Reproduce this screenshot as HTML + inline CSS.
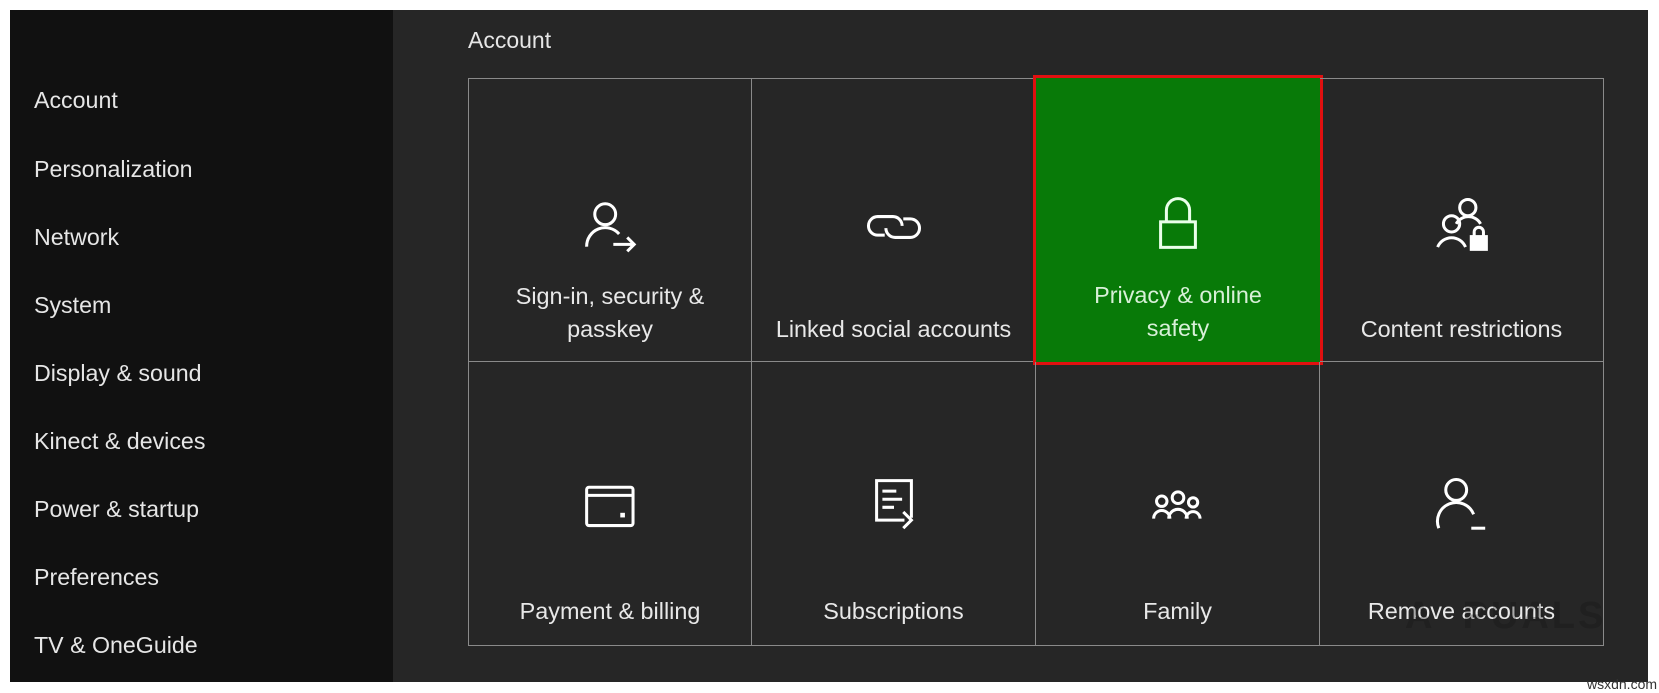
<!DOCTYPE html>
<html><head><style>
html,body{margin:0;padding:0;background:#fff;}
body{width:1659px;height:693px;position:relative;overflow:hidden;font-family:"Liberation Sans",sans-serif;}
#side{position:absolute;left:10px;top:10px;width:383px;height:672px;background:#111;}
#main{position:absolute;left:393px;top:10px;width:1255px;height:672px;background:#262626;}
.nav{position:absolute;left:24px;color:#e6e6e6;font-size:23.2px;line-height:30px;}
.hdr{position:absolute;left:75px;top:17px;color:#e6e6e6;font-size:23px;}
.cell{position:absolute;width:284px;height:284px;box-sizing:border-box;}
.g{border-right:1px solid #8a8a8a;border-bottom:1px solid #8a8a8a;}
.lbl{position:absolute;left:0;width:100%;text-align:center;color:#e8e8e8;font-size:23.4px;line-height:33px;}
svg.ic{position:absolute;left:113px;width:58px;height:58px;}
</style></head><body>
<div id="side">
<div class="nav" style="top:75px">Account</div>
<div class="nav" style="top:144px">Personalization</div>
<div class="nav" style="top:212px">Network</div>
<div class="nav" style="top:280px">System</div>
<div class="nav" style="top:348px">Display &amp; sound</div>
<div class="nav" style="top:416px">Kinect &amp; devices</div>
<div class="nav" style="top:484px">Power &amp; startup</div>
<div class="nav" style="top:552px">Preferences</div>
<div class="nav" style="top:620px">TV &amp; OneGuide</div>
</div>
<div id="main">
<div class="hdr">Account</div>
<div style="position:absolute;left:75px;top:68px;width:1136px;height:568px;border-left:1px solid #8a8a8a;border-top:1px solid #8a8a8a;box-sizing:border-box;"></div>
</div>
<!-- row 1 -->
<div class="cell g" style="left:468px;top:78px;border-left:1px solid #8a8a8a;border-top:1px solid #8a8a8a">
<svg class="ic" style="top:119px" viewBox="0 0 50 50" fill="none" stroke="#fff" stroke-width="2.6"><circle cx="20" cy="14" r="9"/><path d="M4 42 A16 16 0 0 1 32 31"/><path d="M27 40 H45 M39 34 L45 40 L39 46"/></svg>
<div class="lbl" style="top:201px">Sign-in, security &amp;<br>passkey</div></div>
<div class="cell g" style="left:752px;top:78px;border-top:1px solid #8a8a8a">
<svg class="ic" style="top:119px" viewBox="0 0 50 50" fill="none" stroke="#fff" stroke-width="2.6"><path d="M17 32 H11 a8 8 0 0 1 0 -16 H24 a8 8 0 0 1 8 8"/><path d="M33 18 H39 a8 8 0 0 1 0 16 H26 a8 8 0 0 1 -8 -8"/></svg>
<div class="lbl" style="top:234px">Linked social accounts</div></div>
<div class="cell" style="left:1033px;top:75px;width:290px;height:290px;border:3px solid #e01010;background:#087a08">
<svg class="ic" style="top:116px;left:113px" viewBox="0 0 50 50" fill="none" stroke="#eaffea" stroke-width="2.6"><path d="M15 24 V14 a10 10 0 0 1 20 0 V24"/><rect x="10" y="24" width="30" height="22"/></svg>
<div class="lbl" style="top:201px;color:#d8f0d8">Privacy &amp; online<br>safety</div></div>
<div class="cell g" style="left:1320px;top:78px;border-top:1px solid #8a8a8a">
<svg class="ic" style="top:117px" viewBox="0 0 50 50" fill="none" stroke="#fff" stroke-width="2.6"><circle cx="30" cy="10" r="7"/><path d="M20 24 A12 12 0 0 1 41 24"/><circle cx="16" cy="24" r="7"/><path d="M4 44 A13 13 0 0 1 28 44"/><rect x="33" y="35" width="13" height="11" fill="#fff"/><path d="M35.5 35 V31 a4 4 0 0 1 8 0 V35"/></svg>
<div class="lbl" style="top:234px">Content restrictions</div></div>
<!-- row 2 -->
<div class="cell g" style="left:468px;top:362px;border-left:1px solid #8a8a8a">
<svg class="ic" style="top:116px" viewBox="0 0 50 50" fill="none" stroke="#fff" stroke-width="2.6"><rect x="4" y="8" width="40" height="33" rx="2"/><path d="M4 15 H44"/><rect x="33" y="30" width="4" height="4" fill="#fff" stroke="none"/></svg>
<div class="lbl" style="top:233px">Payment &amp; billing</div></div>
<div class="cell g" style="left:752px;top:362px">
<svg class="ic" style="top:114px" viewBox="0 0 50 50" fill="none" stroke="#fff" stroke-width="2.6"><path d="M34 38 H10 V4 H40 V36"/><path d="M15 13 H27 M15 20 H32 M15 27 H25 M33 31 L40 38 L33 45"/></svg>
<div class="lbl" style="top:233px">Subscriptions</div></div>
<div class="cell g" style="left:1036px;top:362px">
<svg class="ic" style="top:116px" viewBox="0 0 50 50" fill="none" stroke="#fff" stroke-width="2.6"><circle cx="11" cy="20" r="4.5"/><path d="M4 35 A7 7 0 0 1 18 35"/><circle cx="25" cy="17" r="5"/><path d="M17 35 A8 8 0 0 1 33 35"/><circle cx="38" cy="21" r="4"/><path d="M32 35 A6 6 0 0 1 44 35"/></svg>
<div class="lbl" style="top:233px">Family</div></div>
<div class="cell g" style="left:1320px;top:362px">
<svg class="ic" style="top:114px" viewBox="0 0 50 50" fill="none" stroke="#fff" stroke-width="2.6"><circle cx="20" cy="12" r="9"/><path d="M5 45 A16 16 0 0 1 35 33"/><path d="M33 45 H45"/></svg>
<div class="lbl" style="top:233px">Remove accounts</div></div>
<div style="position:absolute;left:1405px;top:595px;color:rgba(20,20,20,0.3);font-size:38px;font-weight:bold;letter-spacing:3px">A&nbsp;&nbsp;PUALS</div>
<div style="position:absolute;left:1587px;top:676px;color:#333;font-size:14px">wsxdn.com</div>
</body></html>
